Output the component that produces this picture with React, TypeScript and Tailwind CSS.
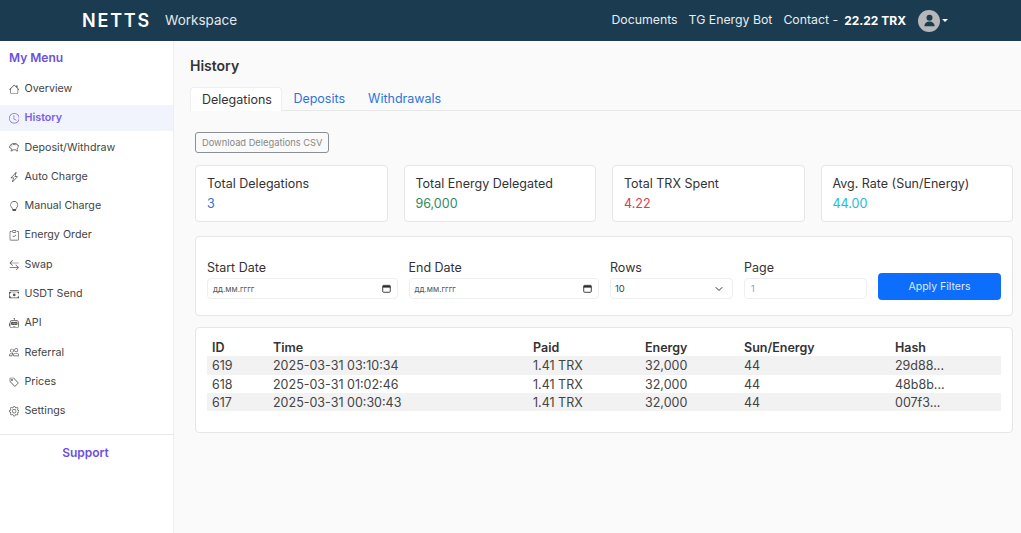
import {
  BsArrowLeftRight,
  BsCashStack,
  BsClipboardCheck,
  BsClock,
  BsGear,
  BsHouse,
  BsLightbulb,
  BsLightningCharge,
  BsPeople,
  BsPiggyBank,
  BsRobot,
  BsTag,
} from "react-icons/bs";
import { ChevronDown } from "lucide-react";

const menu = [
  { label: "Overview", icon: BsHouse },
  { label: "History", icon: BsClock, active: true },
  { label: "Deposit/Withdraw", icon: BsPiggyBank },
  { label: "Auto Charge", icon: BsLightningCharge },
  { label: "Manual Charge", icon: BsLightbulb },
  { label: "Energy Order", icon: BsClipboardCheck },
  { label: "Swap", icon: BsArrowLeftRight },
  { label: "USDT Send", icon: BsCashStack },
  { label: "API", icon: BsRobot },
  { label: "Referral", icon: BsPeople },
  { label: "Prices", icon: BsTag },
  { label: "Settings", icon: BsGear },
];

const stats = [
  { label: "Total Delegations", value: "3", color: "text-[#2f6fdb]" },
  { label: "Total Energy Delegated", value: "96,000", color: "text-[#2e8b5e]" },
  { label: "Total TRX Spent", value: "4.22", color: "text-[#d9404f]" },
  { label: "Avg. Rate (Sun/Energy)", value: "44.00", color: "text-[#22bcd4]" },
];

const rows = [
  { id: "619", time: "2025-03-31 03:10:34", hash: "29d88..." },
  { id: "618", time: "2025-03-31 01:02:46", hash: "48b8b..." },
  { id: "617", time: "2025-03-31 00:30:43", hash: "007f3..." },
];

const gridCols = "grid grid-cols-[61px_260px_112px_99px_151px_1fr]";

function DateField({ label }: { label: string }) {
  return (
    <div className="flex-1">
      <div className="mb-[2px] text-[12.5px] leading-[16px] text-[#333]">{label}</div>
      <div className="mb-px flex h-[21px] items-center justify-between rounded-[4px] border border-[#eceef0] bg-white pl-[5px] pr-[6px]">
        <span className="text-[8px] text-[#555]">дд.мм.гггг</span>
        <svg viewBox="0 0 10 10" className="h-[9px] w-[9px]" fill="none" stroke="#2b2b2b">
          <rect x="0.8" y="1.5" width="8.4" height="7.7" rx="1" />
          <path d="M0.8 3h8.4" strokeWidth="2" />
        </svg>
      </div>
    </div>
  );
}

export default function App() {
  return (
    <div className="flex h-[533px] w-[1021px] flex-col overflow-hidden bg-[#fafafa] font-['Inter',sans-serif]">
      {/* top bar */}
      <header className="flex h-[41px] shrink-0 items-center bg-[#1b3b50] pl-[82px] pr-[73px] text-white">
        <span className="text-[18px] font-semibold tracking-[0.1em]">NETTS</span>
        <span className="ml-[14px] text-[13.5px] text-[#e3e8ec]">Workspace</span>
        <nav className="ml-auto flex items-center text-[12.3px] text-[#e8ecef]">
          <span>Documents</span>
          <span className="ml-[11px]">TG Energy Bot</span>
          <span className="ml-[11px]">Contact -</span>
          <span className="ml-[6px] text-[12px] font-bold text-white">22.22 TRX</span>
          <span className="ml-[12px] flex h-[22px] w-[22px] items-center justify-center rounded-full bg-[#b5b7b9]">
            <svg viewBox="0 0 16 16" className="h-[15px] w-[15px]" fill="#1b3b50">
              <circle cx="8" cy="5" r="3.2" />
              <path d="M2.5 14c.3-3.4 2.4-5 5.5-5s5.2 1.6 5.5 5z" />
            </svg>
          </span>
          <span className="ml-[2px] h-0 w-0 border-x-[3px] border-t-[3.5px] border-x-transparent border-t-white" />
        </nav>
      </header>

      <div className="flex min-h-0 flex-1">
        {/* sidebar */}
        <aside className="w-[174px] shrink-0 border-r border-[#eeeeee] bg-white">
          <div className="pl-[9px] pt-[9px] text-[12px] font-semibold leading-[16px] text-[#6b4fe0]">My Menu</div>
          <ul className="mt-[10px] flex flex-col gap-[3.3px] border-b border-[#e9e9e9] pb-[9.7px]">
            {menu.map(({ label, icon: Icon, active }) => (
              <li
                key={label}
                className={`flex h-[26px] items-center gap-[5.5px] pl-[8.5px] text-[10.7px] ${
                  active ? "bg-[#f1f3fd] font-semibold text-[#7a5fe6]" : "text-[#444]"
                }`}
              >
                <Icon size={10.5} className={active ? "text-[#7a5fe6]" : "text-[#555]"} />
                {label}
              </li>
            ))}
          </ul>
          <div className="mt-[9px] pr-[2px] text-center text-[12px] font-semibold text-[#6b4fe0]">Support</div>
        </aside>

        {/* main */}
        <main className="min-w-0 flex-1 pt-[16px]">
          <h1 className="pl-[16px] text-[14px] font-semibold leading-[18px] text-[#333]">History</h1>

          <div className="ml-[16px] mt-[12px] flex h-[24px] items-end border-b border-[#e8e8e8] text-[12.5px]">
            <span className="-mb-px flex h-[24px] items-center rounded-t-[4px] border border-b-0 border-[#eeeeee] bg-white pl-[11px] pr-[9px] pt-px text-[#333]">
              Delegations
            </span>
            <span className="flex h-[23px] items-center px-[11.5px] pt-[2px] text-[#2b74e0]">Deposits</span>
            <span className="flex h-[23px] items-center px-[11.5px] pt-[2px] text-[#2b74e0]">Withdrawals</span>
          </div>

          <div className="pl-[21px] pr-[8px] pt-[17px]">
            <button className="h-[21px] rounded-[3px] border border-[#8a8f94] bg-[#fafafa] px-[6px] text-[9.3px] text-[#888]">
              Download Delegations CSV
            </button>

            <div className="mt-[12px] grid grid-cols-4 gap-[16px]">
              {stats.map((s) => (
                <div key={s.label} className="h-[57px] rounded-[4px] border border-[#e6e6e6] bg-white px-[11px] pt-[9.5px]">
                  <div className="text-[12.5px] leading-[15px] text-[#333]">{s.label}</div>
                  <div className={`mt-[5.5px] text-[12.5px] leading-[16px] ${s.color}`}>{s.value}</div>
                </div>
              ))}
            </div>

            <div className="mt-[14px] flex h-[80px] items-end gap-[11px] rounded-[4px] border border-[#e6e6e6] bg-white px-[11px] pb-[15px]">
              <DateField label="Start Date" />
              <DateField label="End Date" />
              <div className="w-[123px]">
                <div className="mb-[2px] text-[12.5px] leading-[16px] text-[#333]">Rows</div>
                <div className="mb-px flex h-[21px] items-center justify-between rounded-[4px] border border-[#eceef0] bg-white pl-[4px] pr-[5px] text-[9.5px] text-[#444]">
                  10
                  <ChevronDown size={12} className="mr-[2px] text-[#333]" />
                </div>
              </div>
              <div className="w-[123px]">
                <div className="mb-[2px] text-[12.5px] leading-[16px] text-[#333]">Page</div>
                <div className="mb-px flex h-[21px] items-center rounded-[4px] border border-[#eceef0] bg-white px-[6px] text-[9px] text-[#999]">
                  1
                </div>
              </div>
              <button className="h-[27px] w-[123px] rounded-[4px] bg-[#0d6efd] text-[10.5px] text-[#dfeaff]">
                Apply Filters
              </button>
            </div>

            <div className="mt-[11px] h-[106px] rounded-[4px] border border-[#e6e6e6] bg-white px-[11px] pt-[10px]">
              <div className={`${gridCols} h-[18px] items-center px-[5px] pt-px text-[12.5px] font-semibold text-[#333]`}>
                <span>ID</span>
                <span>Time</span>
                <span>Paid</span>
                <span>Energy</span>
                <span>Sun/Energy</span>
                <span>Hash</span>
              </div>
              {rows.map((r, i) => (
                <div
                  key={r.id}
                  className={`${gridCols} h-[18.3px] items-center px-[5px] pt-px text-[12.5px] text-[#444] ${
                    i % 2 === 0 ? "bg-[#f2f2f2]" : "bg-white"
                  }`}
                >
                  <span>{r.id}</span>
                  <span>{r.time}</span>
                  <span>1.41 TRX</span>
                  <span>32,000</span>
                  <span>44</span>
                  <span>{r.hash}</span>
                </div>
              ))}
            </div>
          </div>
        </main>
      </div>
    </div>
  );
}
